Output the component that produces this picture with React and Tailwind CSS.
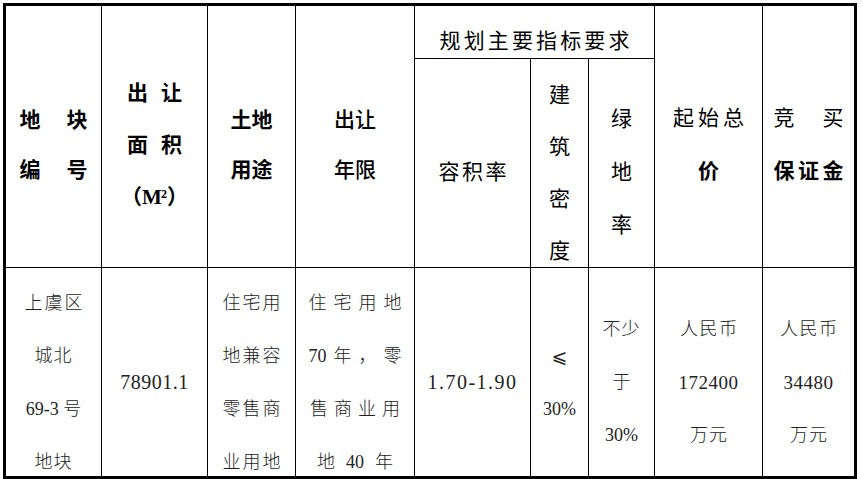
function Spread({ parts, w }) {
  return (
    <div className="flex justify-between" style={{ width: w }}>
      {parts.map((p, i) => (
        <span key={i}>{p}</span>
      ))}
    </div>
  );
}

export default function App() {
  const base = "flex flex-col items-center justify-center border-black";
  const head = base + " row-span-2 border-r border-b pt-[17px] text-[21px]";
  const data = base + " border-r pt-[21px] text-[18px] leading-[53px] font-light text-[#222]";

  return (
    <div className="min-h-screen bg-white pt-[3px] pl-[3px] font-['Liberation_Serif','Noto_Sans_CJK_SC',serif] text-black">
      <div className="grid w-[854px] grid-cols-[96px_106px_88px_119px_116px_58px_66px_108px_91px] grid-rows-[53px_209px_208px] border-[3px] border-black">
        {/* header */}
        <div className={head + " col-start-1 row-start-1 font-bold leading-[50px]"}>
          <Spread parts={["地", "块"]} w={68} />
          <Spread parts={["编", "号"]} w={68} />
        </div>
        <div className={head + " col-start-2 row-start-1 font-bold leading-[52px]"}>
          <Spread parts={["出", "让"]} w={55} />
          <Spread parts={["面", "积"]} w={55} />
          <div>
            （M<sup className="-ml-[1px] text-[12px]">2</sup>）
          </div>
        </div>
        <div className={head + " col-start-3 row-start-1 font-bold leading-[50px]"}>
          <div>土地</div>
          <div>用途</div>
        </div>
        <div className={head + " col-start-4 row-start-1 font-medium leading-[50px]"}>
          <div>出让</div>
          <div>年限</div>
        </div>
        <div className={base + " col-start-5 col-span-3 row-start-1 border-r border-b pt-[19px] text-[21px] leading-none"}>
          <Spread parts={["规", "划", "主", "要", "指", "标", "要", "求"]} w={190} />
        </div>
        <div className={head + " col-start-8 row-start-1 leading-[53px]"}>
          <Spread parts={["起", "始", "总"]} w={71} />
          <div className="font-bold">价</div>
        </div>
        <div className={head + " col-start-9 row-start-1 border-r-0 leading-[53px]"}>
          <Spread parts={["竞", "买"]} w={70} />
          <div className="font-bold">
            <Spread parts={["保", "证", "金"]} w={70} />
          </div>
        </div>

        <div className={base + " col-start-5 row-start-2 border-r border-b pt-[19px] text-[21px]"}>
          <Spread parts={["容", "积", "率"]} w={68} />
        </div>
        <div className={base + " col-start-6 row-start-2 border-r border-b pt-[19px] text-[21px] leading-[52px]"}>
          <div>建</div>
          <div>筑</div>
          <div>密</div>
          <div>度</div>
        </div>
        <div className={base + " col-start-7 row-start-2 border-r border-b pt-[19px] text-[21px] leading-[53px]"}>
          <div>绿</div>
          <div>地</div>
          <div>率</div>
        </div>

        {/* data row */}
        <div className={data + " col-start-1 row-start-3"}>
          <Spread parts={["上", "虞", "区"]} w={58} />
          <div className="tracking-[1px]">城北</div>
          <div>69-3 号</div>
          <div className="tracking-[1px]">地块</div>
        </div>
        <div className={data + " col-start-2 row-start-3 text-[20px] tracking-[0.5px]"}>
          <div>78901.1</div>
        </div>
        <div className={data + " col-start-3 row-start-3"}>
          <Spread parts={["住", "宅", "用"]} w={58} />
          <Spread parts={["地", "兼", "容"]} w={58} />
          <Spread parts={["零", "售", "商"]} w={58} />
          <Spread parts={["业", "用", "地"]} w={58} />
        </div>
        <div className={data + " col-start-4 row-start-3"}>
          <Spread parts={["住", "宅", "用", "地"]} w={93} />
          <Spread parts={["70", "年", "，", "零"]} w={93} />
          <Spread parts={["售", "商", "业", "用"]} w={90} />
          <Spread parts={["地", "40", "年"]} w={76} />
        </div>
        <div className={data + " col-start-5 row-start-3 text-[20px] tracking-[1.5px]"}>
          <div>1.70-1.90</div>
        </div>
        <div className={data + " col-start-6 row-start-3 leading-[52px]"}>
          <div className="font-['DejaVu_Sans',sans-serif] text-[19px] font-normal">⩽</div>
          <div className="text-[18px]">30%</div>
        </div>
        <div className={data + " col-start-7 row-start-3"}>
          <div className="tracking-[1px]">不少</div>
          <div>于</div>
          <div className="text-[18px]">30%</div>
        </div>
        <div className={data + " col-start-8 row-start-3"}>
          <Spread parts={["人", "民", "币"]} w={57} />
          <div className="text-[19px] tracking-[0.5px]">172400</div>
          <Spread parts={["万", "元"]} w={37} />
        </div>
        <div className={data + " col-start-9 row-start-3 border-r-0"}>
          <Spread parts={["人", "民", "币"]} w={57} />
          <div className="text-[19px] tracking-[0.5px]">34480</div>
          <Spread parts={["万", "元"]} w={37} />
        </div>
      </div>
    </div>
  );
}
